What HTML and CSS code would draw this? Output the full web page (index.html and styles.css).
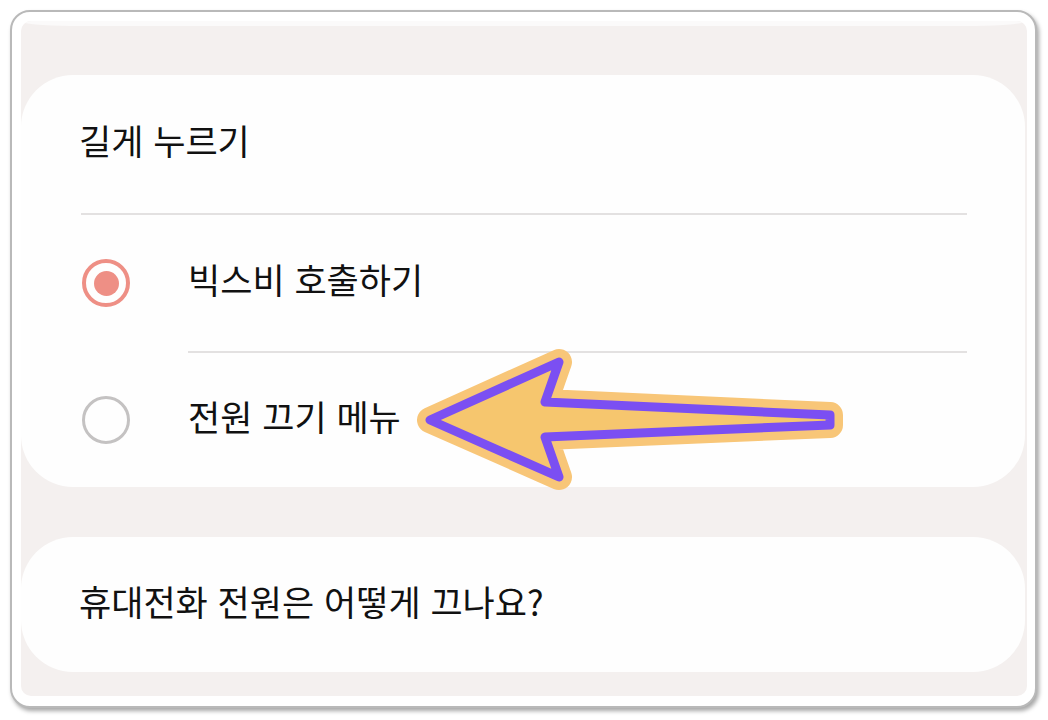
FILE: index.html
```html
<!DOCTYPE html>
<html lang="ko">
<head>
<meta charset="utf-8">
<link rel="stylesheet" href="styles.css">
</head>
<body>
<div class="frame">
  <div class="screen">
    <div class="prev-card"></div>
    <section class="card card-main">
      <div class="title-row">길게 누르기</div>
      <div class="divider"></div>
      <div class="option">
        <span class="radio radio-on"></span>
        <span class="label">빅스비 호출하기</span>
      </div>
      <div class="divider divider-inset"></div>
      <div class="option option-last">
        <span class="radio"></span>
        <span class="label">전원 끄기 메뉴</span>
      </div>
    </section>
    <section class="card card-faq">
      <div class="faq-text">휴대전화 전원은 어떻게 끄나요?</div>
    </section>
  </div>
  <svg class="arrow" width="1048" height="720" viewBox="0 0 1048 720">
    <polygon class="arrow-glow" points="430,420 559,362 545,402 830,415 830,425 545,437 559,477"/>
    <polygon class="arrow-body" points="430,420 559,362 545,402 830,415 830,425 545,437 559,477"/>
  </svg>
</div>
</body>
</html>
```

FILE: styles.css
```css
html, body {
  margin: 0;
  padding: 0;
  background: #ffffff;
}
body {
  width: 1048px;
  height: 720px;
  overflow: hidden;
  font-family: "Noto Sans CJK KR", "Noto Sans", sans-serif;
  color: #111111;
}
.frame {
  position: relative;
  box-sizing: border-box;
  margin: 10px 0 0 10px;
  width: 1027px;
  height: 698px;
  padding: 9px 8px 10px 9px;
  border: 2px solid #b9b9b9;
  border-radius: 20px;
  background: #ffffff;
  box-shadow: 2px 3px 4px rgba(0, 0, 0, 0.35);
}
.screen {
  box-sizing: border-box;
  height: 100%;
  background: #f4f0ef;
  border-radius: 10px;
  display: flex;
  flex-direction: column;
  overflow: hidden;
}
.prev-card {
  height: 5px;
  margin-right: 2px;
  background: #fbfafa;
  border-radius: 0 0 50px 50px / 0 0 5px 5px;
}
.card {
  background: #fefefe;
  border-radius: 52px;
  margin-right: 2px;
}
.card-main {
  margin-top: 49px;
  display: flex;
  flex-direction: column;
}
.title-row {
  box-sizing: border-box;
  height: 138px;
  display: flex;
  align-items: center;
  padding-left: 58px;
  padding-bottom: 10px;
  font-size: 35px;
  line-height: 1;
}
.divider {
  height: 2px;
  background: #e3e1e1;
  margin: 0 58px 0 60px;
}
.divider-inset {
  margin-left: 167px;
}
.option {
  box-sizing: border-box;
  height: 136px;
  display: flex;
  align-items: center;
  padding-left: 61px;
}
.option-last {
  height: 134px;
}
.radio {
  box-sizing: border-box;
  width: 48px;
  height: 48px;
  border-radius: 50%;
  border: 3px solid #c4c2c2;
  flex: none;
  display: flex;
  align-items: center;
  justify-content: center;
}
.radio-on {
  border: 4px solid #ee8f85;
}
.radio-on::after {
  content: "";
  width: 25px;
  height: 25px;
  border-radius: 50%;
  background: #ee8f85;
}
.label {
  margin-left: 58px;
  margin-bottom: 10px;
  font-size: 35px;
  line-height: 1;
}
.card-faq {
  box-sizing: border-box;
  margin-top: 50px;
  height: 135px;
  display: flex;
  align-items: center;
  padding-left: 58px;
  padding-bottom: 8px;
}
.faq-text {
  font-size: 35px;
  line-height: 1;
}
.arrow {
  position: absolute;
  left: -12px;
  top: -12px;
  pointer-events: none;
}
.arrow-glow {
  fill: #f8c678;
  stroke: #f8c678;
  stroke-width: 26;
  stroke-linejoin: round;
}
.arrow-body {
  fill: #f6c66e;
  stroke: #7b4ff2;
  stroke-width: 9;
  stroke-linejoin: round;
}
```
